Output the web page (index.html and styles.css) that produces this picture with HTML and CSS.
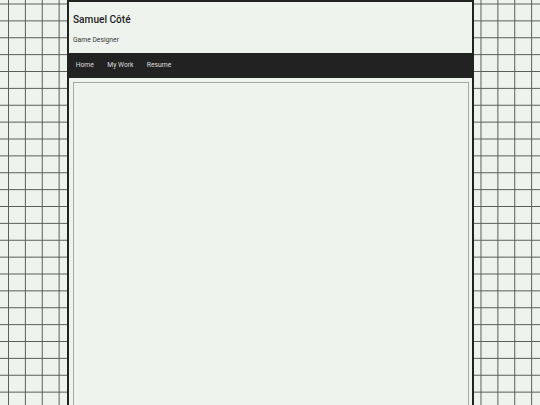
FILE: index.html
```html
<!DOCTYPE html>
<html lang="en">
<head>
<meta charset="utf-8">
<title>Samuel Côté</title>
<link rel="stylesheet" href="styles.css">
</head>
<body>
<div class="page">
  <header class="site-header">
    <h1 class="site-title">Samuel Côté</h1>
    <p class="site-subtitle">Game Designer</p>
  </header>
  <nav class="site-nav">
    <a href="#" class="nav-link">Home</a>
    <a href="#" class="nav-link">My Work</a>
    <a href="#" class="nav-link">Resume</a>
  </nav>
  <main class="main">
    <div class="content-box"></div>
  </main>
</div>
</body>
</html>
```

FILE: styles.css
```css
html, body {
  margin: 0;
  padding: 0;
  height: 100%;
}

body {
  background-color: #eff3ee;
  background-image:
    linear-gradient(to right, #5a5e5a 1px, transparent 1px),
    linear-gradient(to bottom, #5a5e5a 1px, transparent 1px);
  background-size: 16.875px 16.875px;
  background-position: 8px 3.5px;
  font-family: Roboto, "Liberation Sans", sans-serif;
  overflow: hidden;
}

.page {
  box-sizing: border-box;
  width: 407px;
  height: 100%;
  margin: 0 0 0 67px;
  border: 2px solid #222;
  border-bottom: none;
  background: #eff3ee;
  display: flex;
  flex-direction: column;
}

.site-header {
  flex: none;
  padding: 12px 4px 9.6px;
}

.site-title {
  margin: 0 0 9.6px;
  font-size: 10.125px;
  font-weight: 500;
  line-height: 12px;
  color: #1c1c1c;
}

.site-subtitle {
  margin: 0;
  font-size: 6.75px;
  line-height: 8px;
  color: #333;
}

.site-nav {
  background: #222;
  height: 24.6px;
  flex: none;
  display: flex;
  align-items: center;
}

.nav-link {
  color: #ddd;
  text-decoration: none;
  font-size: 6.75px;
  line-height: 8px;
  padding: 0 6.7px;
}

.main {
  flex: 1;
  min-height: 0;
  padding: 4.4px 3.5px 0;
  display: flex;
}

.content-box {
  flex: 1;
  border: 1px solid #a5a8a5;
  border-bottom: none;
  background: #eff3ee;
}
```
